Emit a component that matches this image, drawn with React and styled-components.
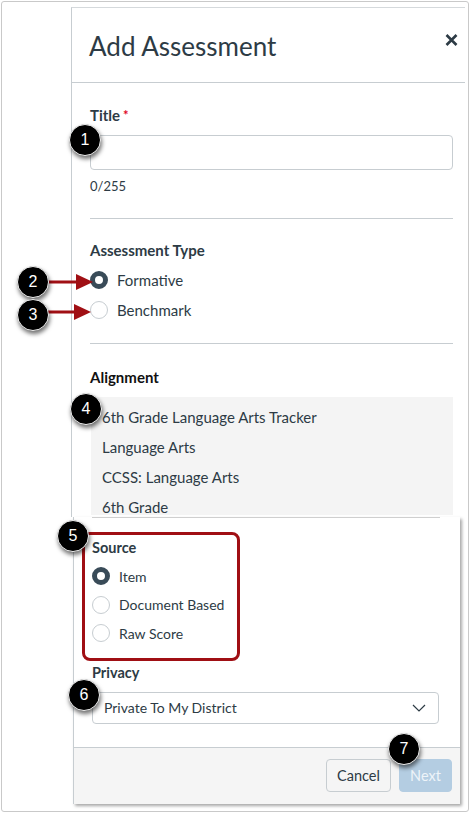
import React from "react";
import styled, { createGlobalStyle } from "styled-components";

const GlobalStyle = createGlobalStyle`
  html, body {
    margin: 0;
    padding: 0;
    background: #ffffff;
    font-family: Lato, "Open Sans", "Liberation Sans", sans-serif;
    color: #2d3b45;
  }
  * { box-sizing: border-box; }
`;

const Page = styled.div`
  position: relative;
  width: 470px;
  height: 814px;
  overflow: hidden;
`;

const Frame = styled.div`
  margin: 1px;
  height: 811px;
  border: 1px solid #c9c9c9;
  border-radius: 3px;
  padding-top: 5px;
  display: flex;
  flex-direction: column;
`;

const TopCard = styled.div`
  margin-left: 69px;
  width: 394px;
  height: 510px;
  border-left: 1px solid #c7cdd1;
  border-top: 1px solid #d5d9dc;
  display: flex;
  flex-direction: column;
`;

const Header = styled.div`
  height: 75px;
  border-bottom: 1px solid #c7cdd1;
  display: flex;
  justify-content: space-between;
  align-items: flex-start;
  padding: 21px 6px 0 17px;
`;

const ModalTitle = styled.h1`
  margin: 0;
  font-size: 26px;
  line-height: 34px;
  font-weight: 400;
  color: #2d3b45;
`;

const CloseButton = styled.button`
  border: 0;
  background: none;
  padding: 0;
  margin-top: 3px;
  width: 16px;
  height: 16px;
  display: flex;
  align-items: center;
  justify-content: center;
  color: #2d3b45;
`;

const Body = styled.div`
  padding: 0 0 0 18px;
  width: 381px;
  display: flex;
  flex-direction: column;
`;

const Label = styled.div`
  margin-top: ${(p) => p.$top}px;
  font-size: ${(p) => p.$size || 15}px;
  line-height: 20px;
  font-weight: 700;
  color: ${(p) => (p.$dark ? "#111" : "#2d3b45")};
`;

const Required = styled.span`
  color: #e0061f;
  margin-left: 3px;
  font-size: 13px;
  vertical-align: top;
`;

const TextInput = styled.div`
  margin-top: 10px;
  height: 35px;
  width: 363px;
  border: 1px solid #c7cdd1;
  border-radius: 4px;
  background: #fff;
`;

const Counter = styled.div`
  margin-top: 6px;
  font-size: 13px;
  line-height: 20px;
`;

const Divider = styled.div`
  margin-top: ${(p) => p.$top}px;
  width: 363px;
  height: 1px;
  background: #c7cdd1;
`;

const RadioGroup = styled.div`
  margin-top: ${(p) => p.$top}px;
  display: flex;
  flex-direction: column;
`;

const RadioRow = styled.label`
  height: ${(p) => p.$h}px;
  display: flex;
  align-items: center;
  gap: 9px;
  font-size: ${(p) => p.$size}px;
  color: #2d3b45;
`;

const RadioDot = styled.span`
  width: 18px;
  height: 18px;
  border-radius: 50%;
  background: #fff;
  border: ${(p) => (p.$checked ? "5px solid #394b58" : "1px solid #c7cdd1")};
  flex-shrink: 0;
`;

const AlignmentBox = styled.div`
  margin-top: 10px;
  margin-left: 1px;
  width: 362px;
  height: 118px;
  background: #f4f4f4;
  padding: 5px 0 0 11px;
  overflow: hidden;
`;

const AlignmentItem = styled.div`
  height: 30px;
  line-height: 30px;
  font-size: 15px;
  color: #2d3b45;
`;

const BottomCard = styled.div`
  margin-left: 71px;
  width: 387px;
  height: 287px;
  border-left: 1px solid #c7cdd1;
  box-shadow: 2px 2px 3px rgba(0, 0, 0, 0.35);
  background: #fff;
  display: flex;
  flex-direction: column;
`;

const Seam = styled.div`
  margin-left: 18px;
  width: 348px;
  height: 1px;
  background: #cfcfcf;
`;

const BottomBody = styled.div`
  padding-left: 18px;
  display: flex;
  flex-direction: column;
  flex: 1;
`;

const Select = styled.div`
  margin-top: 9px;
  width: 347px;
  height: 32px;
  border: 1px solid #c7cdd1;
  border-radius: 4px;
  display: flex;
  align-items: center;
  justify-content: space-between;
  padding: 0 12px 0 11px;
  font-size: 14px;
  color: #2d3b45;
`;

const Footer = styled.div`
  height: 57px;
  border-top: 1px solid #c7cdd1;
  background: #f5f5f5;
  display: flex;
  justify-content: flex-end;
  align-items: flex-start;
  gap: 8px;
  padding: 11px 8px 0 0;
`;

const Button = styled.button`
  height: 33px;
  width: ${(p) => (p.$primary ? 53 : 65)}px;
  padding: 0;
  border-radius: 4px;
  font-family: inherit;
  font-size: 14.5px;
  border: 1px solid ${(p) => (p.$primary ? "#b4cde2" : "#c7cdd1")};
  background: ${(p) => (p.$primary ? "#b4cde2" : "#f5f5f5")};
  color: ${(p) => (p.$primary ? "#eef4f9" : "#2d3b45")};
`;

/* annotations drawn over the screenshot */
const Callout = styled.div`
  position: absolute;
  left: ${(p) => p.$x - 16}px;
  top: ${(p) => p.$y - 16}px;
  width: 32px;
  height: 32px;
  border-radius: 50%;
  background: #000;
  border: 1px solid #f0f0f0;
  box-shadow: 1px 3px 4px rgba(0, 0, 0, 0.55);
  color: #fff;
  font-family: "Liberation Sans", Arial, sans-serif;
  font-size: 16px;
  display: flex;
  align-items: center;
  justify-content: center;
`;

const Arrow = styled.svg`
  position: absolute;
  left: ${(p) => p.$x}px;
  top: ${(p) => p.$y - 9}px;
`;

const Highlight = styled.div`
  position: absolute;
  left: 82px;
  top: 532px;
  width: 158px;
  height: 129px;
  border: 3px solid #a00f14;
  border-radius: 8px;
`;

const RedArrow = ({ x, y, len }) => (
  <Arrow $x={x} $y={y} width={len} height="18" viewBox={`0 0 ${len} 18`}>
    <rect x="0" y="7.5" width={len - 14} height="3" fill="#a00f14" />
    <polygon points={`${len - 17},1 ${len},9 ${len - 17},17`} fill="#a00f14" />
  </Arrow>
);

const Radio = ({ checked, h, size = 15, children }) => (
  <RadioRow $h={h} $size={size}>
    <RadioDot $checked={checked} />
    {children}
  </RadioRow>
);

export default function App() {
  return (
    <Page>
      <GlobalStyle />
      <Frame>
        <TopCard>
          <Header>
            <ModalTitle>Add Assessment</ModalTitle>
            <CloseButton aria-label="Close">
              <svg width="13" height="12" viewBox="0 0 13 12">
                <path d="M1.5 1 L11.5 11 M11.5 1 L1.5 11" stroke="#2d3b45" strokeWidth="2.6" />
              </svg>
            </CloseButton>
          </Header>
          <Body>
            <Label $top={22}>
              Title<Required>*</Required>
            </Label>
            <TextInput />
            <Counter>0/255</Counter>
            <Divider $top={22} />
            <Label $top={21}>Assessment Type</Label>
            <RadioGroup $top={5}>
              <Radio checked h={30}>Formative</Radio>
              <Radio h={30}>Benchmark</Radio>
            </RadioGroup>
            <Divider $top={18} />
            <Label $top={23} $dark>Alignment</Label>
            <AlignmentBox>
              <AlignmentItem>6th Grade Language Arts Tracker</AlignmentItem>
              <AlignmentItem>Language Arts</AlignmentItem>
              <AlignmentItem>CCSS: Language Arts</AlignmentItem>
              <AlignmentItem>6th Grade</AlignmentItem>
            </AlignmentBox>
          </Body>
        </TopCard>
        <BottomCard>
          <Seam />
          <BottomBody>
            <Label $top={20} $size={14.5}>Source</Label>
            <RadioGroup $top={4}>
              <Radio checked h={28.5} size={14}>Item</Radio>
              <Radio h={28.5} size={14}>Document Based</Radio>
              <Radio h={28.5} size={14}>Raw Score</Radio>
            </RadioGroup>
            <Label $top={15} $size={14.5}>Privacy</Label>
            <Select>
              <span>Private To My District</span>
              <svg width="14" height="8" viewBox="0 0 14 8">
                <path d="M1 1 L7 7 L13 1" fill="none" stroke="#2d3b45" strokeWidth="1.2" />
              </svg>
            </Select>
          </BottomBody>
          <Footer>
            <Button>Cancel</Button>
            <Button $primary>Next</Button>
          </Footer>
        </BottomCard>
      </Frame>

      <Highlight />
      <RedArrow x={48} y={282} len={45} />
      <RedArrow x={48} y={312} len={43} />
      <Callout $x={85} $y={140}>1</Callout>
      <Callout $x={33} $y={282}>2</Callout>
      <Callout $x={33} $y={315}>3</Callout>
      <Callout $x={86} $y={409}>4</Callout>
      <Callout $x={73} $y={536}>5</Callout>
      <Callout $x={84} $y={695}>6</Callout>
      <Callout $x={404} $y={749}>7</Callout>
    </Page>
  );
}
